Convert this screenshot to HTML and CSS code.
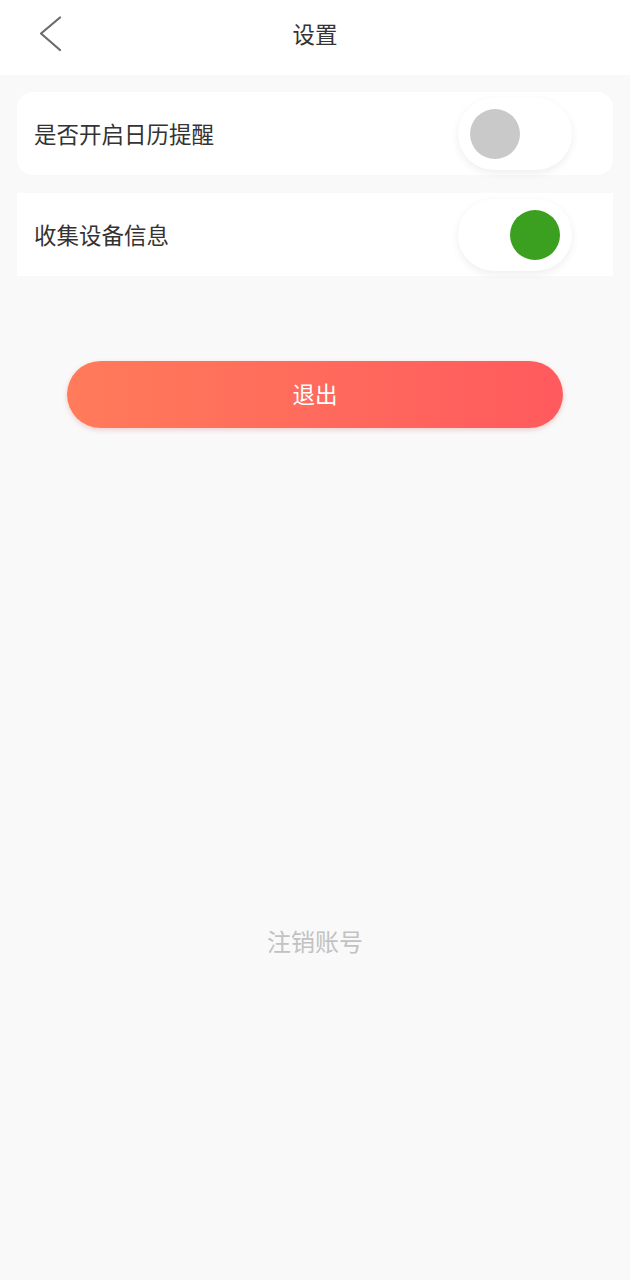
FILE: index.html
```html
<!DOCTYPE html>
<html lang="zh">
<head>
<meta charset="utf-8">
<title>设置</title>
<link rel="stylesheet" href="styles.css">
</head>
<body>
<div class="page">
  <header class="nav">
    <a class="back" aria-label="返回">
      <svg width="24" height="36" viewBox="0 0 24 36"><polyline points="21,1.5 2,17.5 21,34" fill="none" stroke="#6b6b6b" stroke-width="2.2" stroke-linecap="round" stroke-linejoin="round"/></svg>
    </a>
    <h1 class="title">设置</h1>
  </header>
  <main class="content">
    <div class="row row-round">
      <span class="label">是否开启日历提醒</span>
      <div class="switch"><span class="knob knob-off"></span></div>
    </div>
    <div class="row">
      <span class="label">收集设备信息</span>
      <div class="switch switch-on"><span class="knob knob-on"></span></div>
    </div>
    <div class="btn-wrap">
      <button class="logout">退出</button>
    </div>
    <div class="cancel">注销账号</div>
  </main>
</div>
</body>
</html>
```

FILE: styles.css
```css
* { box-sizing: border-box; }
html, body { margin: 0; padding: 0; }
body {
  background: #f9f9f9;
  font-family: "Noto Sans CJK SC", "Noto Sans", sans-serif;
  color: #333;
}
.page { width: 630px; min-height: 1280px; background: #f9f9f9; }
.nav {
  height: 75px;
  background: #fff;
  display: flex;
  align-items: center;
  justify-content: center;
  position: relative;
}
.back {
  position: absolute;
  left: 39px;
  top: 16px;
  width: 24px;
  height: 36px;
  display: block;
}
.back svg { display: block; }
.title {
  margin: 0;
  font-size: 22.5px;
  font-weight: 400;
  color: #333;
  line-height: 1;
  margin-top: -9px;
}
.content { padding: 17px 17px 0; }
.row {
  height: 83px;
  background: #fff;
  display: flex;
  align-items: center;
  justify-content: space-between;
  padding: 0 41px 0 17px;
  margin-bottom: 18px;
}
.row-round { border-radius: 16px; }
.label { font-size: 22.5px; color: #333; line-height: 1; }
.switch {
  width: 114px;
  height: 72px;
  border-radius: 36px;
  background: #fff;
  box-shadow: 0 3px 8px rgba(0,0,0,0.07);
  display: flex;
  align-items: center;
  padding: 0 12px;
}
.switch-on { justify-content: flex-end; }
.knob { width: 50px; height: 50px; border-radius: 50%; display: block; }
.knob-off { background: #c9c9c9; }
.knob-on { background: #3b9f1f; }
.btn-wrap { padding: 67px 50px 0; }
.logout {
  width: 496px;
  height: 67px;
  border: none;
  border-radius: 34px;
  background: linear-gradient(90deg, #ff7b5a 0%, #ff5a5e 100%);
  color: #fff;
  font-family: inherit;
  font-size: 22.5px;
  padding: 0 0 4px;
  box-shadow: 0 2px 5px rgba(200,80,70,0.25);
  display: block;
}
.cancel {
  margin-top: 501px;
  text-align: center;
  font-size: 24px;
  color: #c2c2c2;
  line-height: 1;
}
```
